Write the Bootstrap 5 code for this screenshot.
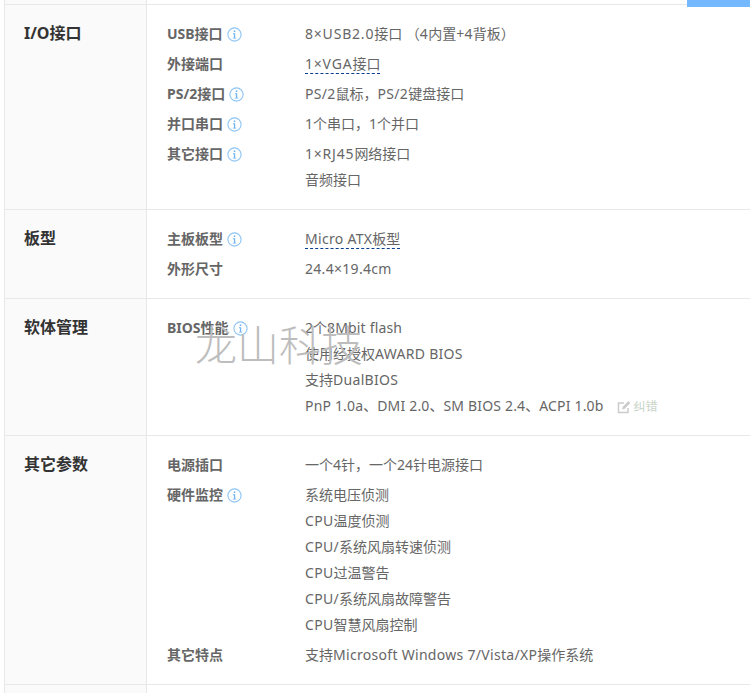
<!DOCTYPE html>
<html lang="zh">
<head>
<meta charset="utf-8">
<title>主板参数</title>
<link href="https://cdn.jsdelivr.net/npm/bootstrap@5.3.0/dist/css/bootstrap.min.css" rel="stylesheet">
<style>
html,body{height:693px;overflow:hidden;background:#fff}
body{font-family:"Noto Sans","Noto Sans CJK SC",sans-serif;font-size:14px;color:#666;position:relative}
.sheet{margin-left:4px;border-left:1px solid #e8e8e8}
.spec-sec{border-bottom:1px solid #e8e8e8}
.spec-head{width:142px;flex:none;background:#fafafa;border-right:1px solid #e8e8e8;padding:16px 0 0 19px;font-size:16px;font-weight:700;line-height:24px;color:#333}
.spec-body{padding:16px 0 0 20px;flex:1}
.sec-a{height:205px}.sec-b{height:89px}.sec-c{height:137px}.sec-d{height:249px}
.sec-top{height:5px}.sec-top .spec-head{padding:0}
.sec-end{height:20px;border-bottom:0}
.spec-row{display:flex;margin-bottom:4px}
.spec-k{width:138px;flex:none;font-size:14px;font-weight:700;line-height:26px;color:#666;display:flex;align-items:center;gap:3px;height:26px}
.spec-v{line-height:26px;font-size:14px;color:#666}
.spec-v div{height:26px;white-space:nowrap}
.lt{letter-spacing:.3px}
.ls{letter-spacing:.17px}
.lw{letter-spacing:.8px}
.dash{border-bottom:1px dashed #0a3d8f;display:inline-block;line-height:19px}
.tip{width:15px;height:15px;flex:none;margin-left:1px}
.fix{color:#c8d4c8;font-size:12px;margin-left:13px}
.fix svg{width:14px;height:14px;vertical-align:-3px;margin-right:3px}
.topbar{position:absolute;left:687px;top:0;width:63px;height:7px;background:#74b9ff}
.wmark{position:absolute;left:195px;top:318px;font-size:42px;line-height:50px;color:#bdbdbd;font-family:"Noto Sans CJK SC",serif;font-weight:300;white-space:nowrap}
</style>
</head>
<body>
<svg width="0" height="0" class="d-block"><defs>
<symbol id="inf" viewBox="0 0 15 15"><circle cx="7.5" cy="7.5" r="6.6" fill="none" stroke="#8cc4f5" stroke-width="1.1"/><rect x="6.8" y="3.4" width="1.5" height="1.6" fill="#6fb3f2"/><path d="M6 6.3h2.2v4.4H9.3v.9H5.8v-.9h1.1V7.2H6z" fill="#6fb3f2"/></symbol>
</defs></svg>
<div class="topbar"></div>
<div class="sheet">
  <div class="spec-sec sec-top d-flex"><div class="spec-head"></div><div class="spec-body p-0"></div></div>

  <div class="spec-sec sec-a d-flex">
    <div class="spec-head">I/O接口</div>
    <div class="spec-body">
      <div class="spec-row"><div class="spec-k"><span>USB接口</span><svg class="tip"><use href="#inf"/></svg></div><div class="spec-v"><div><span class="lw">8×USB2.0</span>接口 （<span class="lt">4</span>内置<span class="lt">+4</span>背板）</div></div></div>
      <div class="spec-row"><div class="spec-k">外接端口</div><div class="spec-v"><div><span class="dash"><span class="lw">1×VGA</span>接口</span></div></div></div>
      <div class="spec-row"><div class="spec-k"><span>PS/2接口</span><svg class="tip"><use href="#inf"/></svg></div><div class="spec-v"><div><span class="lt">PS/2</span>鼠标，<span class="lt">PS/2</span>键盘接口</div></div></div>
      <div class="spec-row"><div class="spec-k">并口串口<svg class="tip"><use href="#inf"/></svg></div><div class="spec-v"><div>1个串口，1个并口</div></div></div>
      <div class="spec-row"><div class="spec-k">其它接口<svg class="tip"><use href="#inf"/></svg></div><div class="spec-v"><div><span class="lw">1×RJ45</span>网络接口</div><div>音频接口</div></div></div>
    </div>
  </div>

  <div class="spec-sec sec-b d-flex">
    <div class="spec-head">板型</div>
    <div class="spec-body">
      <div class="spec-row"><div class="spec-k">主板板型<svg class="tip"><use href="#inf"/></svg></div><div class="spec-v"><div><span class="dash"><span class="lt">Micro ATX</span>板型</span></div></div></div>
      <div class="spec-row"><div class="spec-k">外形尺寸</div><div class="spec-v"><div><span class="lt">24.4×19.4cm</span></div></div></div>
    </div>
  </div>

  <div class="spec-sec sec-c d-flex">
    <div class="spec-head">软体管理</div>
    <div class="spec-body">
      <div class="spec-row"><div class="spec-k"><span>BIOS性能</span><svg class="tip"><use href="#inf"/></svg></div><div class="spec-v"><div>2个<span class="ls">8Mbit flash</span></div><div>使用经授权<span class="lt">AWARD BIOS</span></div><div>支持<span class="lt">DualBIOS</span></div><div><span class="ls">PnP 1.0a</span>、<span class="ls">DMI 2.0</span>、<span class="ls">SM BIOS 2.4</span>、<span class="ls">ACPI 1.0b</span><span class="fix"><svg viewBox="0 0 14 14"><path d="M11 8V12.5H1.5V3H7" fill="none" stroke="#ccc" stroke-width="1.5"/><path d="M5 9.6l.6-2.6L11.4 1l2 2-5.9 6z" fill="#ccc"/></svg>纠错</span></div></div></div>
    </div>
  </div>

  <div class="spec-sec sec-d d-flex">
    <div class="spec-head">其它参数</div>
    <div class="spec-body">
      <div class="spec-row"><div class="spec-k">电源插口</div><div class="spec-v"><div>一个4针，一个24针电源接口</div></div></div>
      <div class="spec-row"><div class="spec-k">硬件监控<svg class="tip"><use href="#inf"/></svg></div><div class="spec-v"><div>系统电压侦测</div><div><span class="lt">CPU</span>温度侦测</div><div><span class="lt">CPU/</span>系统风扇转速侦测</div><div><span class="lt">CPU</span>过温警告</div><div><span class="lt">CPU/</span>系统风扇故障警告</div><div><span class="lt">CPU</span>智慧风扇控制</div></div></div>
      <div class="spec-row"><div class="spec-k">其它特点</div><div class="spec-v"><div>支持<span class="lt">Microsoft Windows 7/Vista/XP</span>操作系统</div></div></div>
    </div>
  </div>

  <div class="spec-sec sec-end d-flex"><div class="spec-head"></div><div class="spec-body p-0"></div></div>
</div>
<div class="wmark">龙山科技</div>
</body>
</html>
